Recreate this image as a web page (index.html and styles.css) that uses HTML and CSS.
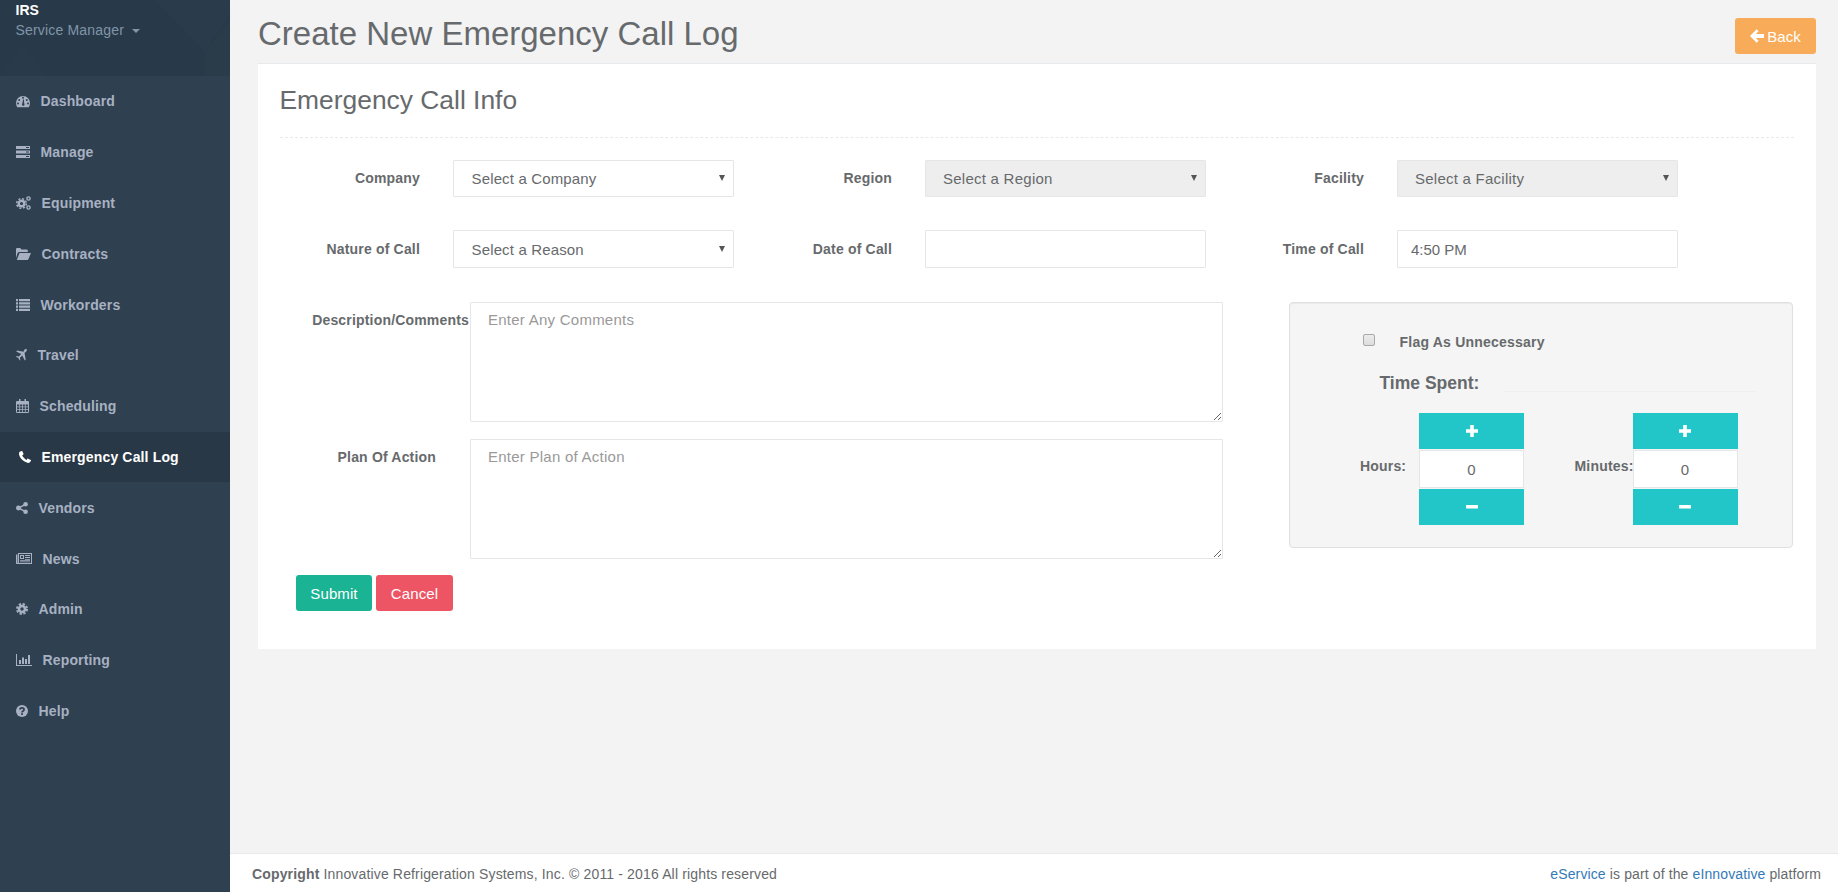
FILE: index.html
```html
<!DOCTYPE html>
<html lang="en">
<head>
<meta charset="utf-8">
<title>Create New Emergency Call Log</title>
<link rel="stylesheet" href="styles.css">
</head>
<body>
<aside class="sidebar">
  <div class="profile">
    <svg class="profile-bg" viewBox="0 0 230 76" preserveAspectRatio="none" aria-hidden="true">
      <polygon points="155,0 230,0 230,14 205,52" fill="#2a3c4b"/>
      <polygon points="0,76 22,44 46,76" fill="#293b4a"/>
      <polygon points="205,52 230,20 230,76 205,76" fill="#2a3b4a"/>
    </svg>
    <div class="profile-name">IRS</div>
    <div class="profile-role">Service Manager <span class="caret"></span></div>
  </div>
  <nav class="nav">
    <a class="nav-item"><svg width="14" height="13" viewBox="0 0 14 13"><path fill="currentColor" fill-rule="evenodd" d="M7 1A7 7 0 0 0 0 8c0 1.6.4 3 1.2 4.2h11.6C13.600 11 14 9.600 14 8A7 7 0 0 0 7 1zM6 2.800a1 1 0 1 0 2 0a1 1 0 1 0-2 0zM2.200 5a1 1 0 1 0 2 0a1 1 0 1 0-2 0zM1 8.500a1 1 0 1 0 2 0a1 1 0 1 0-2 0zM11 8.500a1 1 0 1 0 2 0a1 1 0 1 0-2 0zM9.800 5a1 1 0 1 0 2 0a1 1 0 1 0-2 0zM6.300 8.600L7.200 4.200h.6L8.200 8.600a1.300 1.300 0 1 1-1.900 0z"/></svg><span>Dashboard</span></a>
    <a class="nav-item"><svg width="14" height="12" viewBox="0 0 14 12"><path fill="currentColor" fill-rule="evenodd" d="M0 0h14v3H0zM0 4.500h14v3H0zM0 9h14v3H0zM10 1h3v1h-3zM10 5.500h3v1h-3zM10 10h3v1h-3z"/></svg><span>Manage</span></a>
    <a class="nav-item"><svg width="15" height="14" viewBox="0 0 15 14"><g fill="none" stroke="currentColor"><circle cx="5.500" cy="7.500" r="2.800" stroke-width="2.400"/><circle cx="5.500" cy="7.500" r="4.800" stroke-width="1.500" stroke-dasharray="2 1.770"/><circle cx="12.500" cy="2.500" r="1.600" stroke-width="1.400"/><circle cx="12.500" cy="11.500" r="1.600" stroke-width="1.400"/></g></svg><span>Equipment</span></a>
    <a class="nav-item"><svg width="15" height="12" viewBox="0 0 15 12"><path fill="currentColor" d="M0 10V1.300C0 .600.500 0 1.200 0h3l1.200 1.500h5.200c.7 0 1.200.5 1.200 1.200V4H3.500C2.700 4 2 4.400 1.600 5.100zM3.500 5H15l-2.600 6.200c-.2.500-.7.800-1.200.800H.8z"/></svg><span>Contracts</span></a>
    <a class="nav-item"><svg width="14" height="12" viewBox="0 0 14 12"><path fill="currentColor" d="M0 0h2v2.200H0zM3 0h11v2.200H3zM0 3.250h2v2.200H0zM3 3.250h11v2.200H3zM0 6.500h2v2.200H0zM3 6.500h11v2.200H3zM0 9.750h2v2.200H0zM3 9.750h11v2.200H3z"/></svg><span>Workorders</span></a>
    <a class="nav-item"><svg width="11" height="12" viewBox="0 0 11 12"><path fill="currentColor" d="M10.600.3c.5.500.4 1.400-.2 2L8.500 4.100l1.200 6.400-.9.900-2.600-5-2.300 2.300.4 2.200-.7.700-1.200-2.500L0 7.700l.7-.7 2.200.4 2.300-2.300-5-2.600.9-.9 6.400 1.200L8.500.5c.6-.6 1.600-.7 2.100-.2z"/></svg><span>Travel</span></a>
    <a class="nav-item"><svg width="13" height="14" viewBox="0 0 13 14"><path fill="currentColor" fill-rule="evenodd" d="M3 0h1.500v2H8.500V0H10v2h1.800c.7 0 1.200.5 1.200 1.200v9.600c0 .7-.5 1.200-1.200 1.200H1.200C.5 14 0 13.500 0 12.800V3.200C0 2.500.5 2 1.200 2H3zM1 5.500v2h2.300v-2zM4.100 5.500v2h2v-2zM6.900 5.500v2h2v-2zM9.700 5.500v2H12v-2zM1 8.300v2h2.300v-2zM4.100 8.300v2h2v-2zM6.900 8.300v2h2v-2zM9.700 8.300v2H12v-2zM1 11v2h2.300v-2zM4.100 11v2h2v-2zM6.900 11v2h2v-2zM9.700 11v2H12v-2z"/></svg><span>Scheduling</span></a>
    <a class="nav-item is-active"><svg width="12" height="12" viewBox="0 0 12 12"><path fill="currentColor" d="M2.600 0L.8.800C.2 1.100 0 1.700 0 2.400c0 2 1.100 4.200 2.700 5.900 1.700 1.800 3.800 3.200 6.300 3.600.8.100 1.400-.1 1.800-.6l1.100-1.400c.2-.3.200-.7-.1-.9L9.200 7.700c-.3-.2-.6-.1-.8.100l-.9 1.100C6.300 8.500 3.800 6 3.200 4.500l1.100-.9c.2-.2.300-.5.200-.8L3.300.3C3.200 0 2.900-.1 2.600 0z"/></svg><span>Emergency Call Log</span></a>
    <a class="nav-item"><svg width="12" height="12" viewBox="0 0 12 12"><g fill="currentColor"><circle cx="2.400" cy="6" r="2.400"/><circle cx="9.600" cy="2.300" r="2.300"/><circle cx="9.600" cy="9.700" r="2.300"/></g><path fill="none" stroke="currentColor" stroke-width="1.500" d="M9.600 2.300L2.400 6l7.200 3.700"/></svg><span>Vendors</span></a>
    <a class="nav-item"><svg width="16" height="11" viewBox="0 0 16 11"><path fill="currentColor" fill-rule="evenodd" d="M2 0h14v11H1c-.6 0-1-.4-1-1V1.500h1.500V10h.3c.1 0 .2-.1.2-.2zM3 1v9h12V1zM4 2h4v4H4zM5 3v2h2V3zM9 2h5v1H9zM9 4h5v1H9zM9 6h5v.8H9zM4 7h10v.8H4zM4 8.500h10v.8H4z"/></svg><span>News</span></a>
    <a class="nav-item"><svg width="12" height="12" viewBox="0 0 12 12"><g fill="none" stroke="currentColor"><circle cx="6" cy="6" r="3" stroke-width="2.600"/><circle cx="6" cy="6" r="5" stroke-width="2" stroke-dasharray="2.300 1.630"/></g></svg><span>Admin</span></a>
    <a class="nav-item"><svg width="16" height="12" viewBox="0 0 16 12"><path fill="currentColor" d="M0 0h1v11h15v1H0zM3 6h2v4H3zM6 3.500h2V10H6zM9 5h2v5H9zM12 1h2v9h-2z"/></svg><span>Reporting</span></a>
    <a class="nav-item"><svg width="12" height="12" viewBox="0 0 12 12"><circle cx="6" cy="6" r="6" fill="currentColor"/><path fill="none" stroke="#2f4050" stroke-width="1.700" d="M3.900 4.600C4 3.300 5 2.800 6 2.800c1.200 0 2.100.7 2.100 1.700 0 1.500-2.100 1.400-2.100 3"/><rect x="5.100" y="8.200" width="1.800" height="1.700" fill="#2f4050"/></svg><span>Help</span></a>
  </nav>
</aside>

<div class="main">
  <div class="content">
    <header class="page-head">
      <h1 class="page-title">Create New Emergency Call Log</h1>
      <button class="btn btn-back" type="button"><svg width="14" height="14" viewBox="0 0 13 13"><path fill="currentColor" d="M6.200.2L0 6.500l6.200 6.300 1.800-1.800L5.300 8.300H13V4.700H5.300L8 2z"/></svg>Back</button>
    </header>

    <section class="panel">
      <h2 class="panel-title">Emergency Call Info</h2>
      <form class="form">
        <div class="form-row">
          <div class="field"><label class="field-label">Company</label><div class="select-wrap"><select class="control"><option>Select a Company</option></select></div></div>
          <div class="field"><label class="field-label">Region</label><div class="select-wrap"><select class="control" disabled><option>Select a Region</option></select></div></div>
          <div class="field"><label class="field-label">Facility</label><div class="select-wrap"><select class="control" disabled><option>Select a Facility</option></select></div></div>
        </div>
        <div class="form-row form-row-tall">
          <div class="field"><label class="field-label">Nature of Call</label><div class="select-wrap"><select class="control"><option>Select a Reason</option></select></div></div>
          <div class="field"><label class="field-label">Date of Call</label><input class="control control-text" type="text"></div>
          <div class="field"><label class="field-label">Time of Call</label><input class="control control-text" type="text" value="4:50 PM"></div>
        </div>

        <div class="lower">
          <div class="notes">
            <div class="note-row"><label class="note-label note-label-desc">Description/Comments</label><textarea class="note-input" placeholder="Enter Any Comments"></textarea></div>
            <div class="note-row"><label class="note-label note-label-plan">Plan Of Action</label><textarea class="note-input" placeholder="Enter Plan of Action"></textarea></div>
            <div class="actions">
              <button class="btn btn-submit" type="button">Submit</button>
              <button class="btn btn-cancel" type="button">Cancel</button>
            </div>
          </div>

          <div class="well">
            <div class="flag-row"><input class="flag-check" type="checkbox"><label class="flag-label">Flag As Unnecessary</label></div>
            <div class="time-head"><span class="time-title">Time Spent:</span><span class="time-rule"></span></div>
            <div class="spin-row">
              <label class="spin-label spin-label-hours">Hours:</label>
              <div class="spinner">
                <button class="spin-btn" type="button"><svg width="12" height="12" viewBox="0 0 12 12"><path fill="currentColor" d="M4.200 0h3.600v4.200H12v3.600H7.800V12H4.200V7.800H0V4.200h4.200z"/></svg></button>
                <input class="spin-input" type="text" value="0">
                <button class="spin-btn" type="button"><svg width="12" height="4" viewBox="0 0 12 4"><rect width="12" height="3.600" rx=".5" fill="currentColor"/></svg></button>
              </div>
              <label class="spin-label spin-label-minutes">Minutes:</label>
              <div class="spinner">
                <button class="spin-btn" type="button"><svg width="12" height="12" viewBox="0 0 12 12"><path fill="currentColor" d="M4.200 0h3.600v4.200H12v3.600H7.800V12H4.200V7.800H0V4.200h4.200z"/></svg></button>
                <input class="spin-input" type="text" value="0">
                <button class="spin-btn" type="button"><svg width="12" height="4" viewBox="0 0 12 4"><rect width="12" height="3.600" rx=".5" fill="currentColor"/></svg></button>
              </div>
            </div>
          </div>
        </div>
      </form>
    </section>
  </div>

  <footer class="footer">
    <div><strong>Copyright</strong> Innovative Refrigeration Systems, Inc. © 2011 - 2016 All rights reserved</div>
    <div><a class="link">eService</a> is part of the <a class="link">eInnovative</a> platform</div>
  </footer>
</div>
</body>
</html>
```
FILE: styles.css
```css
* { box-sizing: border-box; }
html, body { height: 100%; }
body {
  margin: 0;
  display: flex;
  height: 892px;
  overflow: hidden;
  background: #f3f3f4;
  color: #676a6c;
  font-family: "Liberation Sans", Arial, sans-serif;
  font-size: 14px;
  letter-spacing: .18px;
}

/* Sidebar */
.sidebar { width: 230px; flex: none; background: #2f4050; color: #a7b1c2; }
.profile {
  position: relative;
  height: 76px;
  padding: 2px 15.5px 0;
  background: #283a49;
  overflow: hidden;
}
.profile-bg { position: absolute; inset: 0; width: 100%; height: 100%; }
.profile-name { position: relative; color: #fff; font-weight: 700; line-height: 16px; letter-spacing: 0; }
.profile-role { position: relative; color: #8095a8; line-height: 20px; margin-top: 2px; }
.caret {
  display: inline-block;
  margin-left: 4px;
  vertical-align: middle;
  border-top: 4px solid #8095a8;
  border-left: 4px solid transparent;
  border-right: 4px solid transparent;
}
.nav-item {
  display: flex;
  align-items: center;
  gap: 11px;
  height: 50.8px;
  padding-left: 15.5px;
  font-weight: 700;
  letter-spacing: .15px;
}
.nav-item svg { flex: none; }
.nav-item.is-active { background: #293846; color: #fff; padding-left: 18.5px; }

/* Main */
.main { flex: 1; min-width: 0; display: flex; flex-direction: column; }
.content { flex: 1; padding: 0 22px 0 28px; }
.page-head {
  display: flex;
  justify-content: space-between;
  align-items: flex-start;
  height: 63px;
}
.page-title {
  margin: 15px 0 0;
  font-size: 33px;
  line-height: 38px;
  font-weight: 400;
  letter-spacing: 0;
}
.btn {
  border: 0;
  border-radius: 3px;
  color: #fff;
  font-family: inherit;
  font-size: 15px;
  letter-spacing: .1px;
  height: 36px;
  padding: 0 14px;
}
.btn-back {
  margin-top: 18px;
  width: 81px;
  padding: 0;
  background: #f8ac59;
  display: flex;
  align-items: center;
  justify-content: center;
  gap: 3px;
}
.btn-submit { background: #1ab394; width: 76px; padding: 0; }
.btn-cancel { background: #ed5565; width: 77px; padding: 0; margin-left: 4px; }

.panel {
  height: 586px;
  padding: 16px 22px 0;
  background: #fff;
  border-top: 1px solid #e7eaec;
}
.panel-title {
  margin: 0 0 0 -.5px;
  height: 58px;
  line-height: 40px;
  font-size: 26.4px;
  font-weight: 400;
  letter-spacing: 0;
  border-bottom: 1px dashed #e7eaec;
}
.form { padding-top: 22px; }
.form-row { display: flex; height: 37px; margin-bottom: 33px; }
.form-row-tall { height: 38px; margin-bottom: 34px; }
.form-row-tall .field-label { line-height: 38px; }
.field { width: 472px; flex: none; display: flex; }
.field-label {
  width: 140px;
  margin-right: 33px;
  flex: none;
  text-align: right;
  font-weight: 700;
  line-height: 36px;
}
.select-wrap { position: relative; width: 281px; height: 100%; }
.select-wrap::after {
  content: "";
  position: absolute;
  right: 9px;
  top: calc(50% - 3.5px);
  border-top: 6px solid #555;
  border-left: 3px solid transparent;
  border-right: 3px solid transparent;
}
.control {
  width: 281px;
  height: 100%;
  padding: 0 17.500px;
  appearance: none;
  background-color: #fff;
  border: 1px solid #e5e6e7;
  border-radius: 1px;
  color: #676a6c;
  font-family: inherit;
  font-size: 15px;
  letter-spacing: .15px;
}
.control:disabled { background-color: #eee; opacity: 1; color: #676a6c; padding-left: 17px; letter-spacing: .25px; }
.control-text { padding: 0 13px; letter-spacing: 0; }

.lower { display: flex; align-items: flex-start; }
.notes { width: 943px; flex: none; }
.note-row { display: flex; margin-bottom: 17px; }
.note-label {
  width: 190px;
  flex: none;
  text-align: right;
  font-weight: 700;
  padding-top: 10px;
  line-height: 16px;
}
.note-label-desc { padding-right: 1px; }
.note-label-plan { padding-right: 34px; }
.note-input {
  width: 753px;
  height: 120px;
  padding: 8px 17px;
  background: #fff;
  border: 1px solid #e5e6e7;
  border-radius: 1px;
  color: #676a6c;
  font-family: inherit;
  font-size: 15px;
  letter-spacing: .25px;
  line-height: 17px;
}
.note-input::placeholder { color: #999; }
.actions { display: flex; padding-left: 16px; margin-top: -1px; }

.well {
  width: 504px;
  height: 246px;
  margin-left: 66px;
  flex: none;
  background: #f5f5f5;
  border: 1px solid #e0e0e0;
  border-radius: 4px;
  box-shadow: inset 0 1px 1px rgba(0, 0, 0, .05);
}
.flag-row { display: flex; align-items: center; padding: 28px 0 0 73px; height: 49px; }
.flag-check {
  appearance: none;
  width: 12px;
  height: 12px;
  margin: 0 24.5px 4px 0;
  border: 1px solid #a9a9a9;
  border-radius: 2px;
  background: linear-gradient(#ececec, #dcdcdc);
}
.flag-label { font-weight: 700; letter-spacing: .22px; }
.time-head { display: flex; align-items: flex-end; margin: 18px 0 0 89.5px; height: 26px; }
.time-title { font-size: 17.500px; font-weight: 700; line-height: 20px; margin-bottom: 3px; width: 125.5px; letter-spacing: 0; }
.time-rule { width: 250px; border-top: 1px solid #eee; margin-bottom: 4px; }
.spin-row { display: flex; margin: 17px 0 0 70px; }
.spin-label { flex: none; font-weight: 700; align-self: center; margin-bottom: 6px; }
.spin-label-hours { width: 59px; }
.spin-label-minutes { width: 58px; margin-left: 50.5px; }
.spinner { width: 105px; flex: none; display: flex; flex-direction: column; }
.spin-btn {
  height: 36px;
  padding: 0;
  border: 0;
  background: #23c6c8;
  color: #fff;
  display: flex;
  align-items: center;
  justify-content: center;
}
.spin-input {
  height: 38px;
  margin: 1px 0 1px;
  width: 100%;
  border: 1px solid #e5e6e7;
  background: #fff;
  color: #676a6c;
  font-family: inherit;
  font-size: 15px;
  text-align: center;
  padding: 0;
}

/* Footer */
.footer {
  height: 39px;
  flex: none;
  display: flex;
  justify-content: space-between;
  align-items: center;
  padding: 1px 17px 0 22px;
  background: #fff;
  border-top: 1px solid #e7eaec;
}
.footer > div:first-child { letter-spacing: .15px; }
.footer > div:last-child { letter-spacing: .12px; }
.link { color: #337ab7; }
```
